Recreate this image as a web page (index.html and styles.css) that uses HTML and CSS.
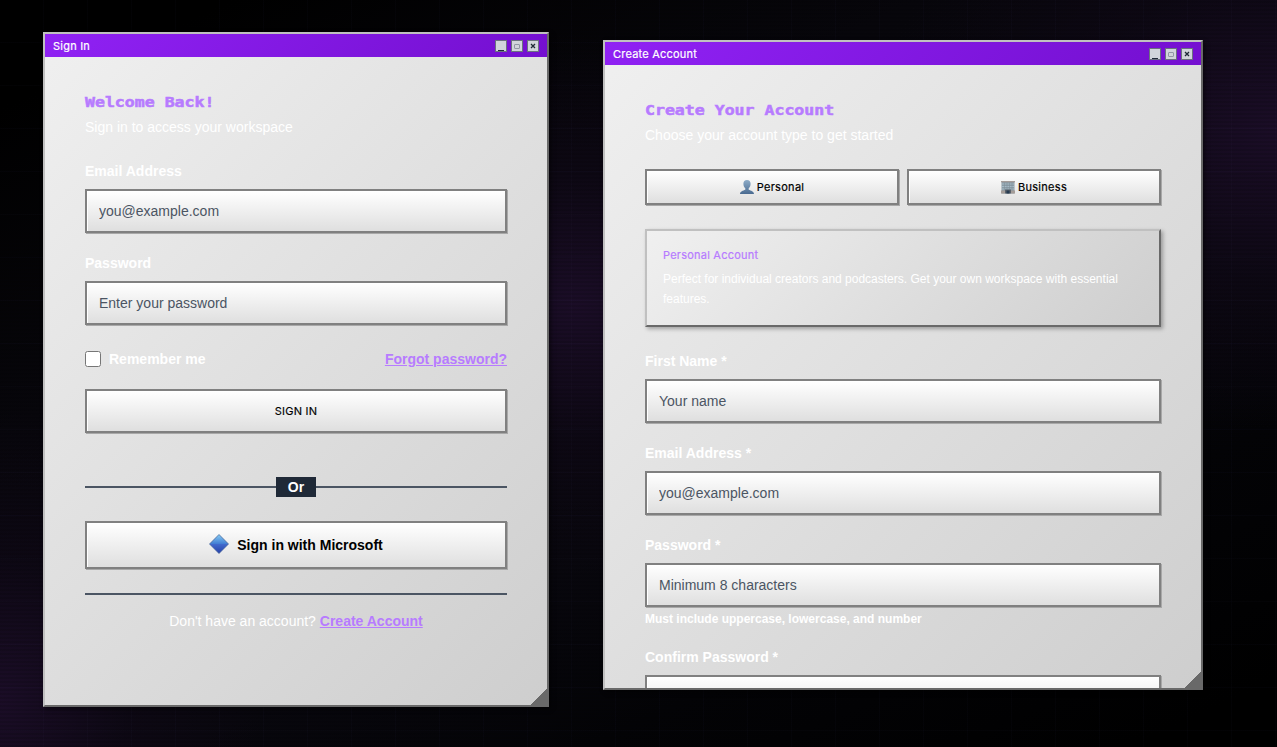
FILE: index.html
```html
<!DOCTYPE html>
<html lang="en">
<head>
<meta charset="utf-8">
<title>Sign In</title>
<link rel="stylesheet" href="styles.css">
</head>
<body>
<main class="desktop">
  <section class="window window-login">
    <header class="titlebar">
      <span>Sign In</span>
      <div class="controls"><button aria-label="Minimize"><i class="min"></i></button><button aria-label="Maximize"><i class="max"></i></button><button aria-label="Close"><svg width="6" height="6" viewBox="0 0 6 6"><path d="M1 1l4 4M5 1L1 5"/></svg></button></div>
    </header>
    <div class="body">
      <h1>Welcome Back!</h1>
      <p class="lead">Sign in to access your workspace</p>
      <label class="field"><span>Email Address</span><input type="text" placeholder="you@example.com"></label>
      <label class="field"><span>Password</span><input type="password" placeholder="Enter your password"></label>
      <div class="options"><label><input class="check" type="checkbox">Remember me</label><a>Forgot password?</a></div>
      <button class="raised submit">SIGN IN</button>
      <div class="divider"><span>Or</span></div>
      <button class="raised microsoft"><svg width="20" height="20" viewBox="0 0 20 20"><defs><linearGradient id="gem" x2="0" y2="1"><stop stop-color="#86cdf4"/><stop offset=".48" stop-color="#437fd4"/><stop offset=".52" stop-color="#4169cc"/><stop offset="1" stop-color="#2540a8"/></linearGradient></defs><path d="M10 .5L19.5 10 10 19.5.5 10z" fill="url(#gem)" stroke="#3c5c94" stroke-width=".7"/></svg>Sign in with Microsoft</button>
      <p class="signup">Don't have an account? <a>Create Account</a></p>
    </div>
    <i class="grip"></i>
  </section>

  <section class="window window-register">
    <header class="titlebar">
      <span>Create Account</span>
      <div class="controls"><button aria-label="Minimize"><i class="min"></i></button><button aria-label="Maximize"><i class="max"></i></button><button aria-label="Close"><svg width="6" height="6" viewBox="0 0 6 6"><path d="M1 1l4 4M5 1L1 5"/></svg></button></div>
    </header>
    <div class="body">
      <h1>Create Your Account</h1>
      <p class="lead">Choose your account type to get started</p>
      <div class="types">
        <button class="raised type"><svg width="14" height="14" viewBox="0 0 14 14"><defs><linearGradient id="person" x2="0" y2="1"><stop stop-color="#8eacc8"/><stop offset="1" stop-color="#4a6b91"/></linearGradient></defs><path d="M7 0C4.700 0 3.400 1.500 3.400 3.800c0 2 .8 3.600 1.900 4.500v1.500C3 10.700.2 11.300 0 14h14c-.2-2.700-3-3.300-5.300-4.200V8.300c1.100-.9 1.900-2.500 1.900-4.500C10.600 1.500 9.300 0 7 0z" fill="url(#person)"/></svg>Personal</button>
        <button class="raised type"><svg width="14" height="14" viewBox="0 0 14 14"><path d="M.5 1h13v12.500H.5z" fill="#8b9ba5"/><path d="M0 1h14v1.300H0z" fill="#a49b98"/><path d="M1 4h12M1 6.500h12M1 9h12" stroke="#a6bac6"/><path d="M3.500 2.500v8M6 2.500v7M8.500 2.500v7M11 2.500v8" stroke="#80919b" stroke-width=".6"/><path d="M0 10.500h4v3H0zM10 10.500h4v3h-4z" fill="#a49c98"/><path d="M4 9.500h6v4H4z" fill="#59616a"/><path d="M5.500 10.500h3v3h-3z" fill="#263b51"/></svg>Business</button>
      </div>
      <div class="info"><h2>Personal Account</h2><p>Perfect for individual creators and podcasters. Get your own workspace with essential features.</p></div>
      <label class="field"><span>First Name *</span><input type="text" placeholder="Your name"></label>
      <label class="field"><span>Email Address *</span><input type="text" placeholder="you@example.com"></label>
      <label class="field"><span>Password *</span><input type="password" placeholder="Minimum 8 characters"><small>Must include uppercase, lowercase, and number</small></label>
      <label class="field"><span>Confirm Password *</span><input type="password"></label>
    </div>
    <i class="grip"></i>
  </section>
</main>
</body>
</html>
```
FILE: styles.css
```css
* { box-sizing: border-box; }
body { margin: 0; font: 14px/20px "Liberation Sans", Arial, sans-serif; color: #fff; }
h1, h2, p { margin: 0; }
button, input { font: inherit; }

.desktop {
  position: relative;
  height: 747px;
  overflow: hidden;
  background:
    repeating-linear-gradient(0deg, rgba(0,0,0,.12) 0 2px, transparent 2px 4px),
    repeating-linear-gradient(90deg, transparent 0 43px, rgba(130,130,255,.02) 43px 44px),
    repeating-linear-gradient(180deg, transparent 0 42px, rgba(130,130,255,.02) 42px 43px),
    radial-gradient(ellipse 260px 290px at 0 700px, #1b0d27, rgba(16,9,24,.6) 50%, transparent),
    radial-gradient(ellipse 330px 270px at 575px 305px, #1b0d27, rgba(16,9,24,.6) 50%, transparent),
    radial-gradient(ellipse 400px 300px at 1277px 130px, #1b0d27, rgba(16,9,24,.6) 50%, transparent),
    linear-gradient(155deg, #000 8%, #07060b 32%, #08070d 62%, #030306 76%, #000 95%);
}

.window {
  position: absolute;
  overflow: hidden;
  border: 2px solid;
  border-color: #c0c0c0 #696969 #696969 #c0c0c0;
  background: linear-gradient(135deg, #f0f0f0, #cecece);
  box-shadow: 2px 2px 4px rgba(0,0,0,.5);
}
.window-login { left: 43px; top: 32px; width: 506px; height: 675px; }
.window-register { left: 603px; top: 40px; width: 600px; height: 650px; }

.titlebar {
  display: flex;
  align-items: center;
  justify-content: space-between;
  height: 23px;
  padding: 0 8px;
  background: linear-gradient(135deg, #9022f4, #740fd0);
  font: 400 11px/16px Inter, sans-serif;
  letter-spacing: .22px;
  -webkit-text-stroke: .2px;
}
.controls { display: flex; gap: 4px; }
.controls button {
  display: grid;
  place-items: center;
  width: 12px;
  height: 12px;
  padding: 0;
  border: 1px solid #6b7280;
  background: #d1d5db;
}
.controls svg { fill: none; stroke: #1f2937; stroke-width: 1.3; }
.min { align-self: end; width: 6px; height: 1px; background: #1f2937; }
.max { width: 6px; height: 5px; margin-top: 1px; border: 1px solid #9298a5; border-radius: 1px; }

.body { padding: 36px 40px; }
h1 {
  width: max-content;
  margin-top: -1px;
  font: bold 13.500px/20px "DejaVu Sans Mono", monospace;
  color: #b77bff;
  -webkit-text-stroke: .5px #b77bff;
  transform: scaleX(1.225);
  transform-origin: left;
}
.lead { margin-top: 5px; }
.field { display: block; margin-top: 24px; font-weight: 700; }
.field + .field { margin-top: 20px; }
.field span { display: block; margin-bottom: 8px; }
.field input, .raised {
  display: block;
  width: 100%;
  border: 2px solid #808080;
  border-radius: 0;
  background: linear-gradient(#fff, #dfdfdf);
  box-shadow: 1px 1px 0 #a8a8a8, inset 1px 1px 0 #fff;
}
.field input { height: 44px; padding: 0 12px; font-weight: 400; }
.field input::placeholder { color: #4b5563; opacity: 1; }
.options { display: flex; justify-content: space-between; margin-top: 24px; font-weight: 700; }
.options label { display: flex; align-items: center; gap: 8px; }
.check { width: 16px; height: 16px; margin: 0; }
a { color: #b77bff; font-weight: 700; text-decoration: underline; }
.submit { height: 44px; margin-top: 20px; color: #000; font: 400 11px/16px Inter, sans-serif; letter-spacing: .22px; -webkit-text-stroke: .15px; }
.divider { display: flex; align-items: center; margin-top: 44px; font-weight: 700; }
.divider::before, .divider::after { content: ""; flex: 1; height: 2px; background: #4b5563; }
.divider span { width: 40px; background: #1f2937; text-align: center; }
.raised.microsoft { display: flex; align-items: center; justify-content: center; gap: 8px; height: 48px; margin-top: 24px; color: #000; font-weight: 700; }
.microsoft svg { margin-top: -2px; }
.signup { margin-top: 24px; padding-top: 16px; border-top: 2px solid #4b5563; text-align: center; }

.types { display: flex; gap: 8px; margin-top: 24px; }
.raised.type { display: flex; align-items: center; justify-content: center; gap: 3px; flex: 1; height: 36px; padding: 0; color: #000; font: 400 11px/16px Inter, sans-serif; letter-spacing: .3px; -webkit-text-stroke: .2px; }
.info {
  height: 98px;
  margin: 24px 0;
  padding: 16px;
  border: 2px solid;
  border-color: #c0c0c0 #696969 #696969 #c0c0c0;
  background: linear-gradient(135deg, #f0f0f0, #cecece);
  box-shadow: 2px 2px 4px rgba(0,0,0,.3);
  font-size: 12px;
}
.info h2 { margin-bottom: 6px; color: #b77bff; font: 400 11px/16px Inter, sans-serif; letter-spacing: .22px; -webkit-text-stroke: .2px; }
.field small { display: block; height: 16px; margin-top: 4px; font-size: 12px; line-height: 16px; }
.grip {
  position: absolute;
  right: 0;
  bottom: 0;
  width: 16px;
  height: 16px;
  background: linear-gradient(135deg, transparent 50%, #696969 50%);
}
```
